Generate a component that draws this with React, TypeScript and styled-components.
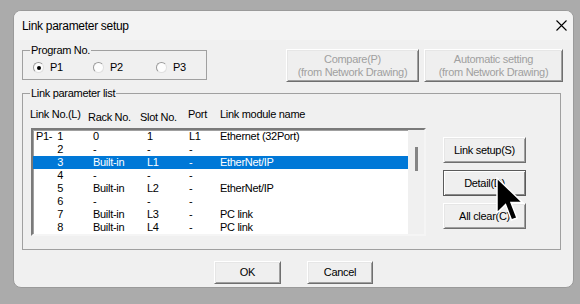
import React from 'react';
import styled, { createGlobalStyle } from 'styled-components';

const GlobalStyle = createGlobalStyle`
  html, body {
    margin: 0;
    padding: 0;
    background: #ababab;
  }
  body {
    font-family: "Liberation Sans", Arial, sans-serif;
    font-size: 11px;
    letter-spacing: -0.3px;
    color: #000;
  }
`;

const Page = styled.div`
  padding: 10px 0 0 13px;
  height: 304px;
  box-sizing: border-box;
`;

const Dialog = styled.div`
  position: relative;
  width: 561px;
  height: 278px;
  box-sizing: border-box;
  border: 1px solid #9a9a9a;
  border-radius: 8px;
  background: #f0f0f0;
  overflow: hidden;
`;

const TitleBar = styled.div`
  display: flex;
  align-items: center;
  height: 29px;
  padding-left: 8px;
  background: #f3f3f3;
  font-size: 12px;
`;

const CloseIcon = styled.svg`
  margin-left: auto;
  margin-right: 6px;
`;

const Body = styled.div`
  padding: 0 12px 0 8px;
`;

const TopRow = styled.div`
  display: flex;
  align-items: flex-start;
  margin-top: 4px;
`;

const Group = styled.fieldset<{ w?: number; h: number; top?: number }>`
  margin: ${p => p.top ?? 0}px 0 0 0;
  padding: 0;
  width: ${p => (p.w ? `${p.w}px` : '100%')};
  height: ${p => p.h}px;
  box-sizing: border-box;
  border: 1px solid #a0a0a0;
  min-width: 0;
`;

const Legend = styled.legend`
  margin-left: 7px;
  padding: 0 1px;
  line-height: 13px;
`;

const RadioRow = styled.div`
  display: grid;
  grid-template-columns: 60px 63px auto;
  margin-top: 4px;
  padding-left: 10px;
  line-height: 13px;
`;

const RadioItem = styled.label`
  display: flex;
  align-items: center;
  gap: 6px;
`;

const RadioCircle = styled.span<{ checked?: boolean }>`
  position: relative;
  width: 9px;
  height: 9px;
  border-radius: 50%;
  background: #fdfdfd;
  border: 1px solid;
  border-color: #9a9a9a #e0e0e0 #e0e0e0 #9a9a9a;
  &::after {
    content: '';
    display: ${p => (p.checked ? 'block' : 'none')};
    position: absolute;
    left: 2.5px;
    top: 2.5px;
    width: 4px;
    height: 4px;
    border-radius: 50%;
    background: #000;
  }
`;

const TopButtons = styled.div`
  display: flex;
  gap: 5px;
  margin-left: auto;
  margin-right: -2px;
  margin-top: 5px;
`;

const Button = styled.button<{ w: number; h: number; isDefault?: boolean }>`
  width: ${p => p.w}px;
  height: ${p => p.h}px;
  padding: 0;
  font: inherit;
  letter-spacing: inherit;
  line-height: 13px;
  color: ${p => (p.disabled ? '#a0a0a0' : '#000')};
  background: #efefef;
  border: 1px solid;
  border-color: ${p => (p.isDefault ? '#5a5a5a' : '#ffffff #6f6f6f #6f6f6f #ffffff')};
  box-shadow: ${p =>
    p.isDefault
      ? 'inset 1px 1px 0 #fff, inset -1px -1px 0 #8a8a8a'
      : 'inset 1px 1px 0 #e6e6e6, inset -1px -1px 0 #a0a0a0'};
  outline: none;
`;

const ListArea = styled.div`
  display: flex;
  margin-top: 8px;
`;

const LeftColumn = styled.div`
  margin-left: 7px;
`;

const HeaderRow = styled.div`
  display: grid;
  grid-template-columns: 58px 52px 48px 32px 1fr;
  height: 16px;
  line-height: 13px;
`;

const HeaderCell = styled.div<{ drop?: boolean }>`
  padding-top: ${p => (p.drop ? 3 : 0)}px;
  white-space: nowrap;
`;

const ListBox = styled.div`
  display: flex;
  margin: 4px 0 0 1px;
  width: 395px;
  height: 108px;
  box-sizing: border-box;
  border: 2px solid;
  border-color: #7a7a7a #f5f5f5 #f5f5f5 #7a7a7a;
  box-shadow: inset 1px 1px 0 #a0a0a0;
  background: #fff;
`;

const Rows = styled.div`
  flex: 1;
`;

const Row = styled.div<{ selected?: boolean }>`
  display: grid;
  grid-template-columns: 57px 54px 42px 31px 1fr;
  height: 13px;
  line-height: 13px;
  padding-left: 3px;
  background: ${p => (p.selected ? '#0078d7' : 'transparent')};
  color: ${p => (p.selected ? '#fff' : '#000')};
  white-space: nowrap;
`;

const LinkNo = styled.div`
  display: flex;
  justify-content: space-between;
  width: 27px;
`;

const ScrollTrack = styled.div`
  width: 16px;
  background: #f0f0f0;
`;

const ScrollThumb = styled.div`
  width: 3px;
  height: 24px;
  margin: 17px 0 0 7px;
  background: #858585;
`;

const SideButtons = styled.div`
  display: flex;
  flex-direction: column;
  gap: 7px;
  margin: 29px 0 0 17px;
`;

const Footer = styled.div`
  display: flex;
  justify-content: center;
  gap: 26px;
  margin-top: 11px;
  padding-left: 4px;
`;

const Cursor = styled.svg`
  position: absolute;
  left: 482px;
  top: 166px;
  pointer-events: none;
`;

type RowData = { prefix?: string; no: number; rack: string; slot: string; port: string; name: string };

const rows: RowData[] = [
  { prefix: 'P1-', no: 1, rack: '0', slot: '1', port: 'L1', name: 'Ethernet (32Port)' },
  { no: 2, rack: '-', slot: '-', port: '-', name: '' },
  { no: 3, rack: 'Built-in', slot: 'L1', port: '-', name: 'EtherNet/IP' },
  { no: 4, rack: '-', slot: '-', port: '-', name: '' },
  { no: 5, rack: 'Built-in', slot: 'L2', port: '-', name: 'EtherNet/IP' },
  { no: 6, rack: '-', slot: '-', port: '-', name: '' },
  { no: 7, rack: 'Built-in', slot: 'L3', port: '-', name: 'PC link' },
  { no: 8, rack: 'Built-in', slot: 'L4', port: '-', name: 'PC link' },
];

const App: React.FC = () => {
  return (
    <Page>
      <GlobalStyle />
      <Dialog>
        <TitleBar>
          Link parameter setup
          <CloseIcon width="11" height="11" viewBox="0 0 11 11">
            <path d="M0.5 0.5 L10.5 10.5 M10.5 0.5 L0.5 10.5" stroke="#000" strokeWidth="1.1" />
          </CloseIcon>
        </TitleBar>
        <Body>
          <TopRow>
            <Group w={185} h={36}>
              <Legend>Program No.</Legend>
              <RadioRow>
                <RadioItem><RadioCircle checked />P1</RadioItem>
                <RadioItem><RadioCircle />P2</RadioItem>
                <RadioItem><RadioCircle />P3</RadioItem>
              </RadioRow>
            </Group>
            <TopButtons>
              <Button w={133} h={33} disabled>Compare(P)<br />(from Network Drawing)</Button>
              <Button w={139} h={33} disabled>Automatic setting<br />(from Network Drawing)</Button>
            </TopButtons>
          </TopRow>

          <Group h={163} top={5}>
            <Legend>Link parameter list</Legend>
            <ListArea>
              <LeftColumn>
                <HeaderRow>
                  <HeaderCell>Link No.(L)</HeaderCell>
                  <HeaderCell drop>Rack No.</HeaderCell>
                  <HeaderCell drop>Slot No.</HeaderCell>
                  <HeaderCell>Port</HeaderCell>
                  <HeaderCell>Link module name</HeaderCell>
                </HeaderRow>
                <ListBox>
                  <Rows>
                    {rows.map(r => (
                      <Row key={r.no} selected={r.no === 3}>
                        <LinkNo>
                          <span>{r.prefix ?? ''}</span>
                          <span>{r.no}</span>
                        </LinkNo>
                        <div>{r.rack}</div>
                        <div>{r.slot}</div>
                        <div>{r.port}</div>
                        <div>{r.name}</div>
                      </Row>
                    ))}
                  </Rows>
                  <ScrollTrack>
                    <ScrollThumb />
                  </ScrollTrack>
                </ListBox>
              </LeftColumn>
              <SideButtons>
                <Button w={83} h={26}>Link setup(S)</Button>
                <Button w={83} h={26} isDefault>Detail(D)</Button>
                <Button w={83} h={26}>All clear(C)</Button>
              </SideButtons>
            </ListArea>
          </Group>

          <Footer>
            <Button w={67} h={23}>OK</Button>
            <Button w={66} h={23}>Cancel</Button>
          </Footer>
        </Body>
        <Cursor width="30" height="48" viewBox="0 0 30 48">
          <path
            d="M1 1 L1 36 L9.5 27.5 L15.5 43 L21 41 L15 25.5 L26.5 25.5 Z"
            fill="#000"
            stroke="#fff"
            strokeWidth="1.5"
            strokeLinejoin="miter"
          />
        </Cursor>
      </Dialog>
    </Page>
  );
};

export default App;
